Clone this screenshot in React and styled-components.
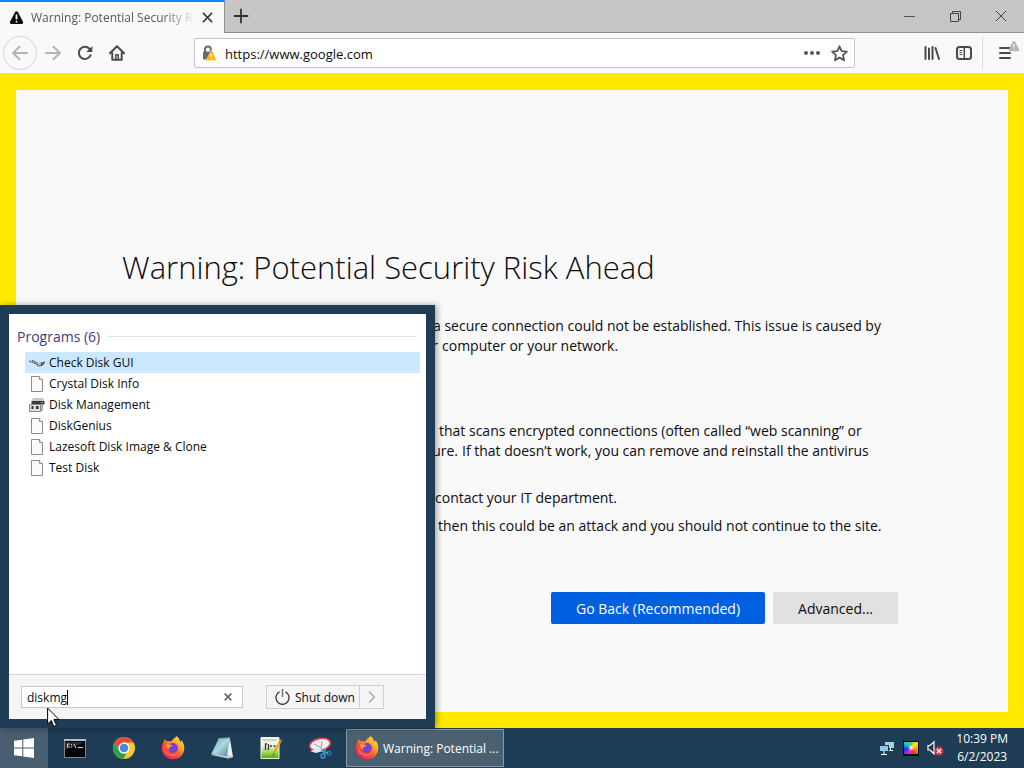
import React, { useState } from 'react';
import styled, { createGlobalStyle } from 'styled-components';

const GlobalStyle = createGlobalStyle`
  * {
    box-sizing: border-box;
  }
  body {
    margin: 0;
    font-family: "Open Sans", "Noto Sans", sans-serif;
    color: #0c0c0d;
  }
  button, input {
    font-family: inherit;
    color: inherit;
  }
  button {
    padding: 0;
    border: none;
    background: none;
  }
  svg {
    display: block;
    flex: none;
  }
`;

const Desktop = styled.div`
  position: relative;
  display: flex;
  flex-direction: column;
  min-height: 100vh;
  overflow: hidden;
`;

/* Browser */

const Browser = styled.div`
  flex: 1;
  display: flex;
  flex-direction: column;
`;

const TabStrip = styled.div`
  display: flex;
  height: 33px;
  background-color: #c6c6c6;
`;

const Tab = styled.div`
  display: flex;
  align-items: center;
  width: 225px;
  padding: 0 5px 0 9px;
  background-color: #f9f9fa;
  border-top: 2px solid #0a84ff;
  border-right: 1px solid #909090;
`;

const TabTitle = styled.div`
  flex: 1;
  margin-left: 7px;
  font-size: 12px;
  line-height: 18px;
  color: #58585a;
  white-space: nowrap;
  overflow: hidden;
  mask-image: linear-gradient(to left, transparent, #000 32px);
`;

const TabClose = styled.button`
  display: flex;
  align-items: center;
  justify-content: center;
  width: 24px;
  height: 24px;
`;

const TabRest = styled.div`
  flex: 1;
  display: flex;
  justify-content: space-between;
  border-bottom: 1px solid #909090;
`;

const StripButton = styled.button`
  display: flex;
  align-items: center;
  justify-content: center;
  width: ${({ $wide }) => ($wide ? 46 : 32)}px;
  height: 32px;
`;

const WindowButtons = styled.div`
  display: flex;
`;

const NavBar = styled.div`
  display: flex;
  align-items: center;
  height: 41px;
  padding: 0 3px;
  background-color: #f9f9fa;
  border-bottom: 1px solid #d8d8c8;
`;

const NavButton = styled.button`
  display: flex;
  align-items: center;
  justify-content: center;
  width: 32px;
  height: 32px;
`;

const BackButton = styled(NavButton)`
  width: 34px;
  height: 34px;
  border: 1px solid #d6d6d8;
  border-radius: 50%;
`;

const UrlBar = styled.div`
  flex: 1;
  display: flex;
  align-items: center;
  height: 30px;
  margin: 0 61px;
  padding: 0 6px;
  background-color: #fff;
  border: 1px solid #c4c4c6;
  border-radius: 2px;
`;

const UrlInput = styled.input`
  flex: 1;
  min-width: 0;
  padding: 2px 8px 0;
  border: none;
  outline: none;
  background: none;
  font-size: 13px;
`;

const PageActionsButton = styled(NavButton)`
  margin-right: 3px;
`;

const Divider = styled.div`
  width: 1px;
  height: 34px;
  margin: 0 6px 0 2px;
  background-color: #dededf;
`;

const MenuButton = styled(NavButton)`
  position: relative;
`;

const MenuBadge = styled.span`
  position: absolute;
  top: 3px;
  right: 1px;
`;

/* Error page */

const PageFrame = styled.div`
  flex: 1;
  display: flex;
  padding: 16px;
  background-color: #ffe900;
`;

const Page = styled.main`
  flex: 1;
  padding: 155px 106px 0;
  background-color: #f9f9fa;
`;

const PageContent = styled.div`
  max-width: 776px;
`;

const PageTitle = styled.h1`
  margin: 0 0 27px;
  font-size: 31px;
  line-height: 44px;
  font-weight: 300;
`;

const Paragraph = styled.div`
  margin-bottom: ${({ $gap }) => $gap}px;
  font-size: 14px;
  line-height: 20px;
  white-space: nowrap;
`;

const Line = styled.div`
  display: flex;
`;

const Lead = styled.span`
  flex: none;
  width: ${({ $width }) => $width}px;
  padding-right: 4px;
  text-align: right;
`;

const PageActions = styled.div`
  display: flex;
  justify-content: flex-end;
  gap: 8px;
  padding-top: 56px;
`;

const PageButton = styled.button`
  height: 32px;
  padding: 0 25px;
  border-radius: 2px;
  font-size: 14px;
  background-color: ${({ $primary }) => ($primary ? '#0060df' : '#e1e1e2')};
  color: ${({ $primary }) => ($primary ? '#fff' : '#0c0c0d')};
`;

/* Start menu */

const StartMenu = styled.section`
  position: absolute;
  left: 0;
  bottom: 40px;
  z-index: 2;
  display: flex;
  flex-direction: column;
  width: 435px;
  height: 423px;
  padding: 9px;
  background-color: #1e3c55;
  box-shadow: 2px 0 6px rgba(0, 0, 0, 0.35);
`;

const Results = styled.div`
  flex: 1;
  padding: 12px 6px 0 8px;
  background-color: #fff;
`;

const GroupTitle = styled.h3`
  display: flex;
  align-items: center;
  gap: 8px;
  margin: 0 4px 5px 0;
  font-size: 14px;
  line-height: 21px;
  font-weight: 400;
  color: #3e3e7c;
  &::after {
    content: '';
    flex: 1;
    height: 1px;
    background-color: #dfe3ea;
  }
`;

const ResultList = styled.ul`
  margin: 0 0 0 8px;
  padding: 0;
  list-style: none;
`;

const ResultButton = styled.button`
  display: flex;
  align-items: center;
  gap: 4px;
  width: 100%;
  height: 21px;
  padding-left: 4px;
  font-size: 12px;
  text-align: left;
  background-color: ${({ $active }) => ($active ? '#cce8ff' : 'transparent')};
`;

const MenuFooter = styled.div`
  display: flex;
  align-items: center;
  gap: 23px;
  height: 45px;
  padding: 0 12px;
  background-color: #f5f5f6;
  border-top: 1px solid #d5d5d5;
`;

const SearchBox = styled.div`
  display: flex;
  align-items: center;
  width: 222px;
  height: 22px;
  padding: 0 10px 0 5px;
  background-color: #fff;
  border: 1px solid #c8c8c8;
`;

const SearchInput = styled.input`
  width: 40px;
  padding: 0;
  border: none;
  outline: none;
  background: none;
  font-size: 12px;
`;

const Caret = styled.span`
  flex: none;
  width: 1px;
  height: 15px;
  margin-right: auto;
  background-color: #000;
`;

const ShutDown = styled.div`
  display: flex;
  height: 24px;
  border: 1px solid #cfcfcf;
`;

const ShutDownButton = styled.button`
  display: flex;
  align-items: center;
  gap: 4px;
  width: 92px;
  padding-left: 7px;
  font-size: 12px;
  white-space: nowrap;
`;

const ShutDownMore = styled.button`
  display: flex;
  align-items: center;
  justify-content: center;
  width: 24px;
  border-left: 1px solid #cfcfcf;
`;

/* Taskbar */

const TaskBar = styled.footer`
  display: flex;
  height: 40px;
  background-color: #1e3c55;
  color: #fff;
`;

const StartButton = styled.button`
  display: flex;
  align-items: center;
  justify-content: center;
  width: 48px;
  background-color: #475f71;
`;

const Shortcuts = styled.div`
  flex: 1;
  display: flex;
  padding-left: 2px;
`;

const Shortcut = styled.button`
  display: flex;
  align-items: center;
  justify-content: center;
  width: 49px;
`;

const TaskButton = styled.button`
  display: flex;
  align-items: center;
  gap: 4px;
  width: 158px;
  height: 38px;
  margin: 1px 0 0 2px;
  padding-left: 8px;
  font-size: 12px;
  white-space: nowrap;
  background-color: #4b6172;
  border: 1px solid #8698a5;
`;

const Tray = styled.div`
  display: flex;
  align-items: center;
  gap: 8px;
`;

const Clock = styled.time`
  margin: 0 16px 0 4px;
  font-size: 12px;
  line-height: 18px;
  text-align: center;
`;

const Pointer = styled.div`
  position: absolute;
  left: 47px;
  bottom: 40px;
  z-index: 3;
`;

/* Icons */

const WarningIcon = ({ size, color, mark }) => (
  <svg width={size} height={size} viewBox="0 0 16 16">
    <path fill={color} d="M8 1.2c-.7 0-1.2.3-1.5.9L1.1 12.6C.5 13.8 1.2 15 2.5 15h11c1.3 0 2-1.2 1.4-2.4L9.5 2.1C9.2 1.5 8.7 1.2 8 1.2z" />
    <path stroke={mark} strokeWidth="1.9" strokeLinecap="round" d="M8 5.5v3.7M8 12.3v.1" />
  </svg>
);

const CrossIcon = ({ size, width, color }) => (
  <svg width={size} height={size} viewBox="0 0 12 12" stroke={color} strokeWidth={width} fill="none">
    <path d="M1 1l10 10M11 1L1 11" />
  </svg>
);

const PlusIcon = () => (
  <svg width="16" height="16" viewBox="0 0 16 16" stroke="#333" strokeWidth="1.8" strokeLinecap="round">
    <path d="M1.5 8h13M8 1.5v13" />
  </svg>
);

const MinimizeIcon = () => (
  <svg width="11" height="11" viewBox="0 0 11 11" stroke="#555"><path d="M0 5.5h11" /></svg>
);

const RestoreIcon = () => (
  <svg width="11" height="11" viewBox="0 0 11 11" stroke="#444" fill="none">
    <path d="M.5 2.5h8v8h-8zM2.5 2.5v-2h8v8h-2" />
  </svg>
);

const ArrowIcon = ({ flip }) => (
  <svg width="16" height="16" viewBox="0 0 16 16" stroke="#b4b4b6" strokeWidth="2" fill="none" strokeLinecap="round" strokeLinejoin="round">
    <path d={flip ? 'M1 8h14M8.5 1.8L15 8l-6.500 6.200' : 'M15 8H1M7.5 1.8L1 8l6.5 6.2'} />
  </svg>
);

const ReloadIcon = () => (
  <svg width="16" height="16" viewBox="0 0 16 16">
    <path fill="none" stroke="#4a4a4c" strokeWidth="2" strokeLinecap="round" d="M13.6 10.2A6.1 6.1 0 1 1 12.4 3.7" />
    <path fill="#4a4a4c" d="M15.3 1v5.5a.5.5 0 0 1-.5.5H9.300z" />
  </svg>
);

const HomeIcon = () => (
  <svg width="16" height="16" viewBox="0 0 16 16" fill="none" stroke="#4a4a4c" strokeWidth="2" strokeLinecap="round" strokeLinejoin="round">
    <path d="M1 8.2L8 1.2l7 7M3.300 8v6.700h9.400V8" />
    <path strokeWidth="1.5" d="M6.8 14V9.8h2.400V14" />
  </svg>
);

const LockIcon = () => (
  <svg width="16" height="16" viewBox="0 0 16 16">
    <path fill="none" stroke="#6a6a6c" strokeWidth="2" d="M4 7V4.5a2.9 2.9 0 0 1 5.8 0V7" />
    <rect x="2" y="6.5" width="10" height="8" rx="1" fill="#6a6a6c" />
    <path fill="#ffb300" stroke="#ffdb80" strokeWidth=".5" strokeLinejoin="round" d="M10.2 5.3L5 15.3h10.500z" />
    <path stroke="#fff" strokeWidth="1.3" d="M10.2 8.8v3M10.200 12.900v1.200" />
  </svg>
);

const DotsIcon = () => (
  <svg width="16" height="16" viewBox="0 0 16 16" fill="#5a5a5c">
    <circle cx="2" cy="8" r="2" /><circle cx="8" cy="8" r="2" /><circle cx="14" cy="8" r="2" />
  </svg>
);

const StarIcon = () => (
  <svg width="17" height="17" viewBox="0 0 16 16" fill="none" stroke="#555557" strokeWidth="1.7" strokeLinejoin="round">
    <path d="M8 1.2l2 4.5 4.9.5-3.600 3.300 1 4.900L8 11.900l-4.300 2.500 1-4.900L1.100 6.200 6 5.700z" />
  </svg>
);

const LibraryIcon = () => (
  <svg width="16" height="16" viewBox="0 0 16 16" stroke="#4a4a4c" strokeWidth="2" strokeLinecap="round">
    <path d="M1.5 2v12M5 3.5V14M8.500 2v12M11.500 3l3.500 11" />
  </svg>
);

const SidebarIcon = () => (
  <svg width="16" height="16" viewBox="0 0 16 16" fill="none" stroke="#4a4a4c">
    <rect x="1" y="2" width="14" height="12" rx="2.5" strokeWidth="2" />
    <path strokeWidth="1.5" d="M8.3 2v12" />
    <path strokeWidth="1" d="M3.5 5.5h3M3.5 7.5h2.5M3.5 9.5h3" />
  </svg>
);

const BurgerIcon = () => (
  <svg width="16" height="16" viewBox="0 0 16 16" stroke="#4a4a4c" strokeWidth="2" strokeLinecap="round">
    <path d="M3 3h10M3 8h10M3 13h10" />
  </svg>
);

const FileIcon = () => (
  <svg width="16" height="16" viewBox="0 0 16 16" fill="#fbfbfb" stroke="#8c8c8c">
    <path d="M2.5.5h8l3 3v12h-11z" /><path d="M10.5.5v3h3" />
  </svg>
);

const CheckDiskIcon = () => (
  <svg width="16" height="16" viewBox="0 0 16 16">
    <path fill="#a9b0b4" d="M0 6l5-1 5 3-3 2z" />
    <path fill="#5c5f62" d="M7 9l6-1 2.500-2 .5 2-3 3-4 .5z" />
    <path stroke="#3b3e41" strokeDasharray="1.500 1" d="M0 6l6 3M3 5.500l5 3M12 7l2 2" />
    <path stroke="#edf3f5" d="M2 8l4 2M9 10l3-1" />
  </svg>
);

const DiskManagementIcon = () => (
  <svg width="16" height="16" viewBox="0 0 16 16">
    <path fill="#c9c9c9" d="M4 1h10l1.500 3H2.500z" />
    <path fill="#3b3b3b" d="M2.500 4h13v3.500h-13z" />
    <path fill="#7fb58b" d="M12 5h2v1h-2z" />
    <path fill="#dedede" stroke="#888" d="M.5 7.500h11v7H.5z" />
    <path fill="#333" d="M2.500 9h2v3h-2zM7 9h2.500v3H7z" />
    <path fill="#aaa" d="M12 8h2v5l-2 2z" />
  </svg>
);

const PowerIcon = () => (
  <svg width="17" height="17" viewBox="0 0 17 17" fill="none" stroke="#222" strokeWidth="1.2">
    <path d="M5.500 2.800a6.600 6.600 0 1 0 6 0" /><path stroke="#777" strokeWidth="1.5" d="M8.500 0v8" />
  </svg>
);

const ChevronIcon = () => (
  <svg width="8" height="12" viewBox="0 0 8 12" fill="none" stroke="#a0a0a0" strokeWidth="1.1"><path d="M1 .5L6.500 6 1 11.500" /></svg>
);

const WindowsIcon = () => (
  <svg width="20" height="20" viewBox="0 0 20 20" fill="#fff">
    <path d="M0 2.800l8.300-1.100v7.800H0zM9.300 1.500L20 0v9.500H9.300zM0 10.500h8.300v7.800L0 17.200zM9.300 10.500H20V20L9.300 18.500z" />
  </svg>
);

const TerminalIcon = () => (
  <svg width="24" height="24" viewBox="0 0 24 24">
    <rect x="1.5" y="3.5" width="21" height="18" fill="#050505" stroke="#7b848b" />
    <path fill="#b4bfc7" d="M1 3h22v2H1z" />
    <path fill="#2b2b2b" d="M2 6h20L2 14z" />
    <path fill="none" stroke="#d4d4d4" d="M6.500 8H4.500v3h2M8.500 8v1M8.500 10.500v1M11 8l2 4M15 11.500h5" />
  </svg>
);

const ChromeIcon = () => (
  <svg width="24" height="24" viewBox="0 0 24 24">
    <circle cx="12" cy="12" r="11" fill="#fbc92f" />
    <path fill="#e44a38" d="M2.500 6.500A11 11 0 0 1 21.500 6.500H12A5.500 5.500 0 0 0 7.200 14.700z" />
    <path fill="#27a350" d="M2.500 6.500l4.700 8.200A5.500 5.500 0 0 0 14.500 17L11.500 23A11 11 0 0 1 2.500 6.500z" />
    <circle cx="12" cy="12" r="5.5" fill="#fff" /><circle cx="12" cy="12" r="4.3" fill="#4688ee" />
  </svg>
);

const FirefoxIcon = () => (
  <svg width="24" height="24" viewBox="0 0 24 24">
    <defs>
      <linearGradient id="fox" x1="1" y1="0" x2=".2" y2="1">
        <stop offset="0" stopColor="#fff24a" /><stop offset=".35" stopColor="#ffae25" />
        <stop offset=".65" stopColor="#ff5034" /><stop offset="1" stopColor="#ec1678" />
      </linearGradient>
    </defs>
    <path fill="url(#fox)" d="M15 0c3 1.700 4 4 4.200 6 1-.6 1.100-1.600 1.200-2C25 10 23.500 16.500 20.200 20c-4.500 4.500-11.800 4.200-16 .2C-.2 16 .2 9.500 3 5l.8-2.200C4.500 4 5 4.600 6 5.200c1.500-.4 3-.2 4 .3C11.500 4 12 3.500 12.800 2.600 14 2 15 1 15 0z" />
    <circle cx="12" cy="12" r="5" fill="#7542d5" />
    <path fill="#ffa52b" d="M5 8.500c2.500-.7 4.500-.2 6.500 1.200L9 11c-1.500 1-1.500 2-1 3-2-1-3-3-3-5.500z" />
    <path fill="#ff6a33" d="M4 10c-.5 6 3.500 8.500 8.500 8 3 0 5-1.500 6.500-3.500-1 5-8 7.500-12.500 4C3 17.500 2.500 13 4 10z" />
  </svg>
);

const NotepadIcon = () => (
  <svg width="24" height="24" viewBox="0 0 24 24">
    <defs>
      <linearGradient id="pad" x1="0" y1="0" x2="1" y2="1">
        <stop offset="0" stopColor="#6fa4b1" /><stop offset=".5" stopColor="#acd9df" /><stop offset="1" stopColor="#478491" />
      </linearGradient>
    </defs>
    <path fill="#e9eeee" d="M20 3l3 18-5 1.500-2-9z" />
    <path fill="#c5c9cb" d="M1 19l17 3.500 5-1.500-5-2z" />
    <path fill="url(#pad)" d="M8.500 3L20 2l-3 18-16-1.500z" />
    <path stroke="#d7e1e4" d="M8.500 2.700L20 1.500" strokeDasharray="1 1" />
  </svg>
);

const EditorIcon = () => (
  <svg width="24" height="24" viewBox="0 0 24 24">
    <defs>
      <linearGradient id="edit" x1="0" y1="0" x2="0" y2="1">
        <stop offset=".4" stopColor="#f2f4ea" /><stop offset=".8" stopColor="#89ca34" /><stop offset="1" stopColor="#52a51d" />
      </linearGradient>
    </defs>
    <path fill="url(#edit)" stroke="#edf3e7" d="M2 1.500h18v21H2z" />
    <path stroke="#aab39b" d="M4 4h13" />
    <path fill="none" stroke="#30362a" strokeWidth="1.3" d="M6.500 8v6M9.500 8v6M6 8h2M11 10h2M14.500 10h2" />
    <path stroke="#e8a91c" strokeWidth="2.6" d="M22 4l-7 13" /><path stroke="#955a16" d="M23.500 3l-3 4M15 17l-1 3" />
  </svg>
);

const SnipIcon = () => (
  <svg width="24" height="24" viewBox="0 0 24 24" fill="none">
    <ellipse cx="12" cy="8.5" rx="10.5" ry="6" transform="rotate(-12 12 8.5)" fill="#f6eef0" stroke="#d7404c" strokeWidth="1.6" />
    <path stroke="#a5abb2" strokeWidth="1.2" d="M6 8l8 4M14 5l-1 8" />
    <path fill="#dfe7ed" d="M2 15l9-3 4 3-7 2z" />
    <circle cx="15" cy="20" r="2" stroke="#348cc4" strokeWidth="1.7" />
    <ellipse cx="21" cy="17" rx="2" ry="1.7" stroke="#2872a4" strokeWidth="1.700" />
    <path stroke="#4b9cce" strokeWidth="1.5" d="M17 12l-1 7M13 15l7 2" />
  </svg>
);

const NetworkIcon = () => (
  <svg width="16" height="16" viewBox="0 0 16 16">
    <path fill="#9ed3ed" d="M6 2h9v6H6z" /><path stroke="#fff" d="M11.500 8v2M9 10.500h5" />
    <path fill="#1e3c55" d="M0 5h10v7H0z" /><path fill="#8ccbe8" d="M1 6h8v5H1z" />
    <path stroke="#fff" d="M5 11v3M2 14.500h6" />
  </svg>
);

const PaletteMark = styled.span`
  width: 16px;
  height: 15px;
  border: 1px solid #080808;
  border-bottom-width: 2px;
  background: radial-gradient(circle, #fff, transparent 35%),
    conic-gradient(#57d22d, #ffe515, #ff8a18, #f32b2b, #db26d8, #2534e8, #1cbef0, #57d22d);
`;

const VolumeIcon = () => (
  <svg width="17" height="16" viewBox="0 0 17 16" fill="none">
    <path stroke="#fff" strokeWidth="1.2" d="M1 5.500h2L7 1.800v12L3 10H1z" />
    <circle cx="12" cy="11" r="4.5" fill="#d83244" /><path stroke="#fff" strokeWidth="1.4" d="M10 9l4 4M14 9l-4 4" />
  </svg>
);

const PointerIcon = () => (
  <svg width="13" height="21" viewBox="0 0 13 21">
    <path fill="#fff" stroke="#000" d="M.6 1v16l3.700-3.500 2.500 6 2.700-1.200-2.600-5.800h5z" />
  </svg>
);

const programs = [
  { name: 'Check Disk GUI', icon: CheckDiskIcon },
  { name: 'Crystal Disk Info', icon: FileIcon },
  { name: 'Disk Management', icon: DiskManagementIcon },
  { name: 'DiskGenius', icon: FileIcon },
  { name: 'Lazesoft Disk Image & Clone', icon: FileIcon },
  { name: 'Test Disk', icon: FileIcon },
];

const shortcuts = [
  { name: 'Command Prompt', icon: TerminalIcon },
  { name: 'Chrome', icon: ChromeIcon },
  { name: 'Firefox', icon: FirefoxIcon },
  { name: 'Notepad', icon: NotepadIcon },
  { name: 'Editor', icon: EditorIcon },
  { name: 'Snipping Tool', icon: SnipIcon },
];

// lead is the part of a line that runs under the start menu
const paragraphs = [
  {
    gap: 65,
    lines: [
      { width: 311, text: 'a secure connection could not be established. This issue is caused by' },
      { width: 320, lead: 'your', text: 'computer or your network.' },
    ],
  },
  {
    gap: 27,
    lines: [
      { width: 317, text: 'that scans encrypted connections (often called “web scanning” or' },
      { width: 340, lead: 'feature.', text: 'If that doesn’t work, you can remove and reinstall the antivirus' },
    ],
  },
  { gap: 8, lines: [{ width: 313, text: 'contact your IT department.' }] },
  { gap: 0, lines: [{ width: 316, text: 'then this could be an attack and you should not continue to the site.' }] },
];

const BrowserWindow = () => {
  const [url, setUrl] = useState('https://www.google.com');

  return (
    <Browser>
      <TabStrip>
        <Tab>
          <WarningIcon size={15} color="#0c0c0d" mark="#fff" />
          <TabTitle>Warning: Potential Security Risk</TabTitle>
          <TabClose aria-label="Close tab"><CrossIcon size={11} width={1.7} color="#3a3a3c" /></TabClose>
        </Tab>
        <TabRest>
          <StripButton aria-label="New tab"><PlusIcon /></StripButton>
          <WindowButtons>
            <StripButton $wide aria-label="Minimize"><MinimizeIcon /></StripButton>
            <StripButton $wide aria-label="Restore"><RestoreIcon /></StripButton>
            <StripButton $wide aria-label="Close"><CrossIcon size={12} width={1} color="#444" /></StripButton>
          </WindowButtons>
        </TabRest>
      </TabStrip>
      <NavBar>
        <BackButton aria-label="Back"><ArrowIcon /></BackButton>
        <NavButton aria-label="Forward"><ArrowIcon flip /></NavButton>
        <NavButton aria-label="Reload"><ReloadIcon /></NavButton>
        <NavButton aria-label="Home"><HomeIcon /></NavButton>
        <UrlBar>
          <LockIcon />
          <UrlInput aria-label="Address" value={url} onChange={e => setUrl(e.target.value)} />
          <PageActionsButton aria-label="Page actions"><DotsIcon /></PageActionsButton>
          <StarIcon />
        </UrlBar>
        <NavButton aria-label="Library"><LibraryIcon /></NavButton>
        <NavButton aria-label="Sidebar"><SidebarIcon /></NavButton>
        <Divider />
        <MenuButton aria-label="Menu">
          <BurgerIcon />
          <MenuBadge><WarningIcon size={12} color="#b4b4b4" mark="#eee" /></MenuBadge>
        </MenuButton>
      </NavBar>
      <PageFrame>
        <Page>
          <PageContent>
            <PageTitle>Warning: Potential Security Risk Ahead</PageTitle>
            {paragraphs.map(({ gap, lines }) => (
              <Paragraph key={lines[0].text} $gap={gap}>
                {lines.map(({ width, lead, text }) => (
                  <Line key={text}>
                    <Lead $width={width}>{lead}</Lead>
                    {text}
                  </Line>
                ))}
              </Paragraph>
            ))}
            <PageActions>
              <PageButton $primary>Go Back (Recommended)</PageButton>
              <PageButton>Advanced...</PageButton>
            </PageActions>
          </PageContent>
        </Page>
      </PageFrame>
    </Browser>
  );
};

const App = () => {
  const [query, setQuery] = useState('diskmg');

  return (
    <Desktop>
      <GlobalStyle />
      <BrowserWindow />
      <StartMenu>
        <Results>
          <GroupTitle>Programs (6)</GroupTitle>
          <ResultList>
            {programs.map(({ name, icon: Icon }, i) => (
              <li key={name}>
                <ResultButton $active={i === 0}><Icon />{name}</ResultButton>
              </li>
            ))}
          </ResultList>
        </Results>
        <MenuFooter>
          <SearchBox>
            <SearchInput aria-label="Search programs" value={query} onChange={e => setQuery(e.target.value)} />
            <Caret />
            <button type="button" aria-label="Clear"><CrossIcon size={8} width={2.4} color="#666" /></button>
          </SearchBox>
          <ShutDown>
            <ShutDownButton><PowerIcon />Shut down</ShutDownButton>
            <ShutDownMore aria-label="More options"><ChevronIcon /></ShutDownMore>
          </ShutDown>
        </MenuFooter>
      </StartMenu>
      <TaskBar>
        <StartButton aria-label="Start"><WindowsIcon /></StartButton>
        <Shortcuts>
          {shortcuts.map(({ name, icon: Icon }) => (
            <Shortcut key={name} aria-label={name}><Icon /></Shortcut>
          ))}
          <TaskButton><FirefoxIcon />Warning: Potential ...</TaskButton>
        </Shortcuts>
        <Tray>
          <NetworkIcon />
          <PaletteMark />
          <VolumeIcon />
          <Clock>10:39 PM<br />6/2/2023</Clock>
        </Tray>
      </TaskBar>
      <Pointer><PointerIcon /></Pointer>
    </Desktop>
  );
};

export default App;
